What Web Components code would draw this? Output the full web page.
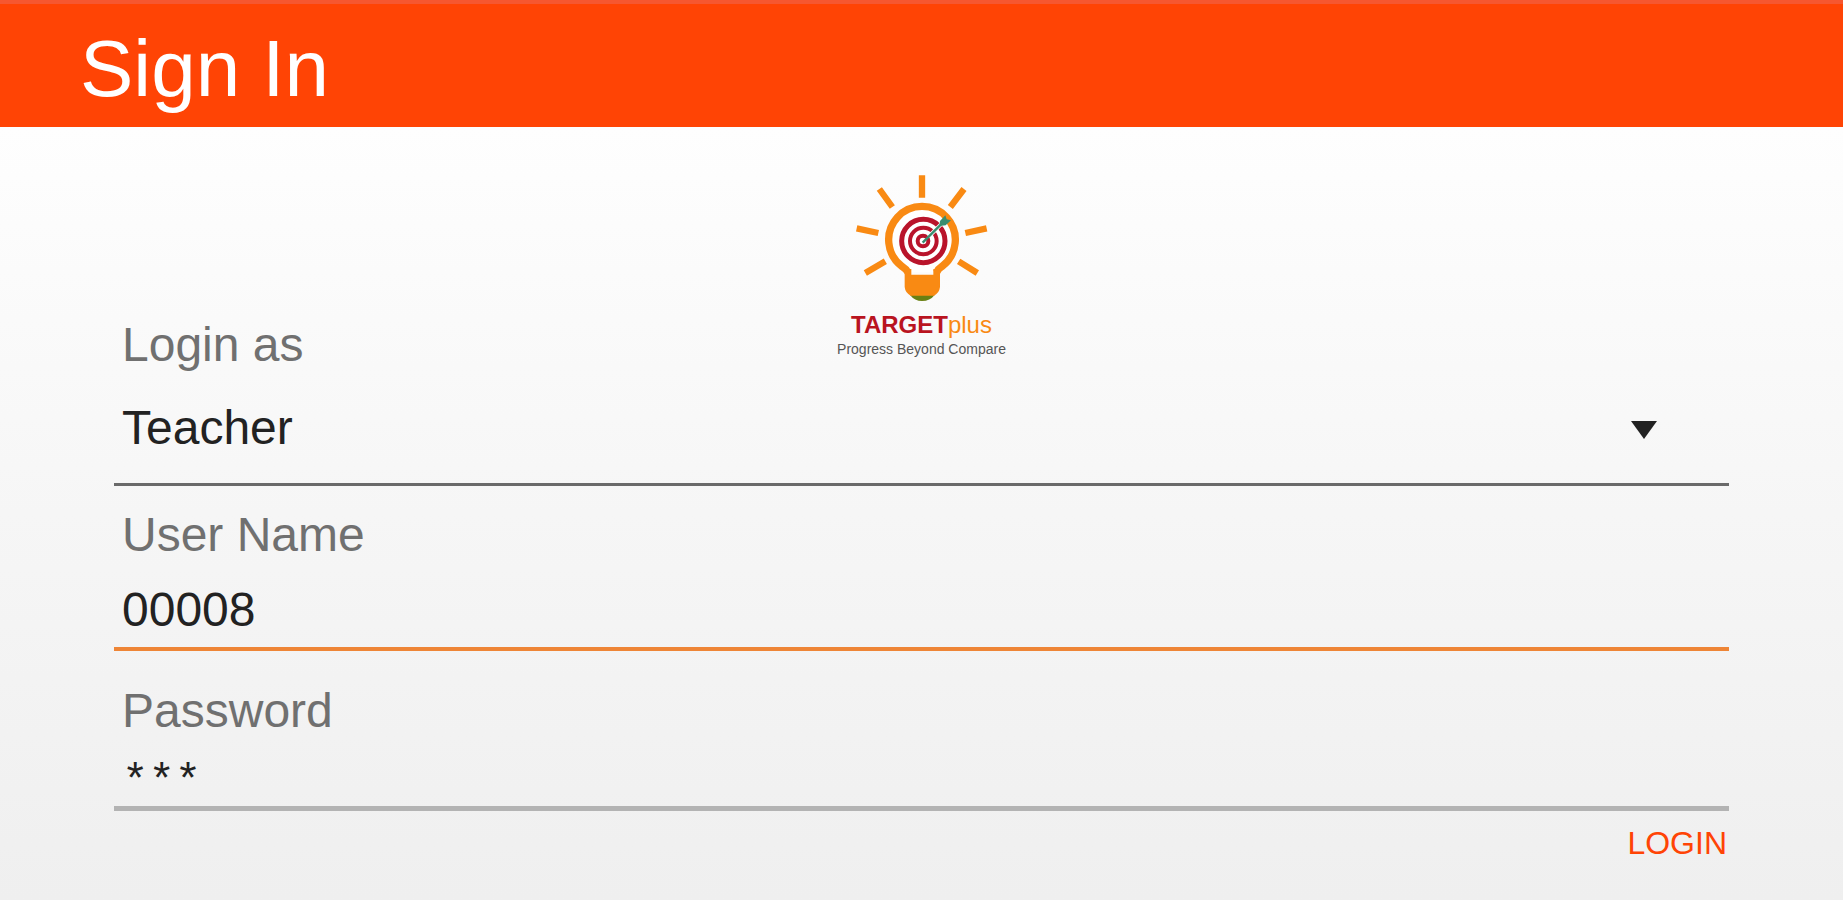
<!DOCTYPE html>
<html lang="en">
<head>
<meta charset="UTF-8">
<meta name="viewport" content="width=device-width, initial-scale=1.0">
<title>Sign In</title>
<style>
  body {
    margin: 0;
    font-family: "Liberation Sans", Arial, sans-serif;
  }
</style>
</head>
<body>
<sign-in-page></sign-in-page>

<script>
class PageHeader extends HTMLElement {
  connectedCallback() {
    this.attachShadow({ mode: 'open' });
    this.shadowRoot.innerHTML = `
      <style>
        :host {
          display: block;
          background-color: #ff4405;
          border-top: 4px solid #f65730;
          padding: 20px 80px 13px;
          color: #fff;
        }

        h1 {
          margin: 0;
          font-size: 80px;
          font-weight: 400;
          line-height: 90px;
        }
      </style>

      <h1><slot></slot></h1>
    `;
  }
}

class TargetLogo extends HTMLElement {
  connectedCallback() {
    this.attachShadow({ mode: 'open' });
    this.shadowRoot.innerHTML = `
      <style>
        :host {
          display: flex;
          flex-direction: column;
          align-items: center;
          white-space: nowrap;
        }

        svg {
          display: block;
          width: 144px;
          height: 140px;
        }

        .name {
          font-size: 24px;
          line-height: 28px;
          color: #f98a13;
        }

        .name b {
          color: #b9141f;
        }

        .tagline {
          font-size: 14px;
          line-height: 20px;
          color: #555;
        }
      </style>

      <svg viewBox="90 30 432 420" fill="none" aria-hidden="true">
        <!-- rays -->
        <path d="M306 43V110M178 84L217 138M432 84L391 138M110 202L175 216M500 202L436 216M136 336L196 301M472 336L416 301" stroke="#f98a13" stroke-width="19"/>
        <!-- bulb -->
        <path d="M264 334C264 334 258 324 247 317A100 100 0 1 1 365 317C354 324 350 334 350 334" fill="#fff" stroke="#f98a13" stroke-width="22"/>
        <path d="M270 402H344Q330 420 306 420Q284 420 270 402Z" fill="#6a8013"/>
        <path d="M254 324H274V341H340V324H360V378Q358 396 342 404H272Q256 396 254 378Z" fill="#f98a13"/>
        <!-- target -->
        <circle cx="310" cy="240" r="65" stroke="#b9142b" stroke-width="15"/>
        <circle cx="310" cy="240" r="40" stroke="#b9142b" stroke-width="12"/>
        <circle cx="309" cy="240" r="16" stroke="#b9142b" stroke-width="12"/>
        <!-- arrow -->
        <path d="M326 227L366 187" stroke="#fff" stroke-width="12"/>
        <path d="M308 245L366 187" stroke="#398d70" stroke-width="7"/>
        <path d="M360 180L376 163L380 175L393 178L377 193L358 195Z" fill="#398d70"/>
      </svg>
      <div class="name"><b>TARGET</b>plus</div>
      <div class="tagline">Progress Beyond Compare</div>
    `;
  }
}

const fieldStyles = `
  :host {
    display: block;
  }

  label {
    display: block;
    padding-left: 8px;
    font-size: 48px;
    line-height: 56px;
    color: #707070;
  }

  select,
  input {
    display: block;
    box-sizing: border-box;
    width: 100%;
    margin: 0;
    border: 0;
    border-radius: 0;
    outline: 0;
    background: transparent;
    font-family: inherit;
    font-size: 48px;
    line-height: 56px;
    color: #222;
  }
`;

class SelectField extends HTMLElement {
  connectedCallback() {
    this.attachShadow({ mode: 'open' });
    this.shadowRoot.innerHTML = `
      <style>
        ${fieldStyles}

        .top {
          display: grid;
          grid-template-columns: 1fr auto 1fr;
          align-items: end;
        }

        .control {
          display: grid;
          align-items: center;
        }

        .control > * {
          grid-area: 1 / 1;
        }

        select {
          appearance: none;
          height: 113px;
          padding: 0 8px;
          border-bottom: 3px solid #6a6a6a;
        }

        svg {
          justify-self: end;
          width: 26px;
          height: 18px;
          margin-right: 72px;
          pointer-events: none;
        }
      </style>

      <div class="top">
        <label for="control">${this.getAttribute('label')}</label>
        <slot></slot>
      </div>
      <div class="control">
        <select id="control">
          <option>${this.getAttribute('value')}</option>
        </select>
        <svg viewBox="0 0 26 18" aria-hidden="true"><path d="M0 0H26L13 18Z" fill="#222"/></svg>
      </div>
    `;
  }
}

class TextField extends HTMLElement {
  connectedCallback() {
    this.attachShadow({ mode: 'open' });
    this.shadowRoot.innerHTML = `
      <style>
        ${fieldStyles}

        input {
          height: 88px;
          padding: 16px 8px 8px;
          border-bottom: 4px solid #ee8536;
        }

        :host([masked]) input {
          height: 72px;
          padding: 19px 8px 0;
          border-bottom: 5px solid #b3b3b3;
          font-family: "Liberation Mono", monospace;
          font-size: 44px;
          line-height: 48px;
        }
      </style>

      <label for="control">${this.getAttribute('label')}</label>
      <input id="control" type="text" autocomplete="off" spellcheck="false" value="${this.getAttribute('value')}">
    `;
  }
}

class TextButton extends HTMLElement {
  connectedCallback() {
    this.attachShadow({ mode: 'open' });
    this.shadowRoot.innerHTML = `
      <style>
        :host {
          display: block;
        }

        button {
          padding: 0 2px;
          border: 0;
          background: transparent;
          font-family: inherit;
          font-size: 32px;
          line-height: 40px;
          color: #ff4405;
          cursor: pointer;
        }
      </style>

      <button type="button"><slot></slot></button>
    `;
  }
}

class SignInPage extends HTMLElement {
  connectedCallback() {
    this.attachShadow({ mode: 'open' });
    this.shadowRoot.innerHTML = `
      <style>
        :host {
          display: flex;
          flex-direction: column;
          min-height: 100vh;
          background: #fff;
        }

        main {
          flex: 1;
          display: flex;
          flex-direction: column;
          padding: 44px 114px 24px;
          background: linear-gradient(#fefefe, #f6f6f6 50%, #efefef);
        }

        target-logo {
          margin-bottom: 14px;
        }

        .user {
          margin-top: 21px;
        }

        .password {
          margin-top: 32px;
        }

        text-button {
          align-self: flex-end;
          margin-top: 12px;
        }
      </style>

      <page-header>Sign In</page-header>
      <main>
        <select-field label="Login as" value="Teacher">
          <target-logo></target-logo>
        </select-field>
        <text-field class="user" label="User Name" value="00008"></text-field>
        <text-field class="password" label="Password" value="***" masked></text-field>
        <text-button>LOGIN</text-button>
      </main>
    `;
  }
}

customElements.define('page-header', PageHeader);
customElements.define('target-logo', TargetLogo);
customElements.define('select-field', SelectField);
customElements.define('text-field', TextField);
customElements.define('text-button', TextButton);
customElements.define('sign-in-page', SignInPage);
</script>
</body>
</html>
